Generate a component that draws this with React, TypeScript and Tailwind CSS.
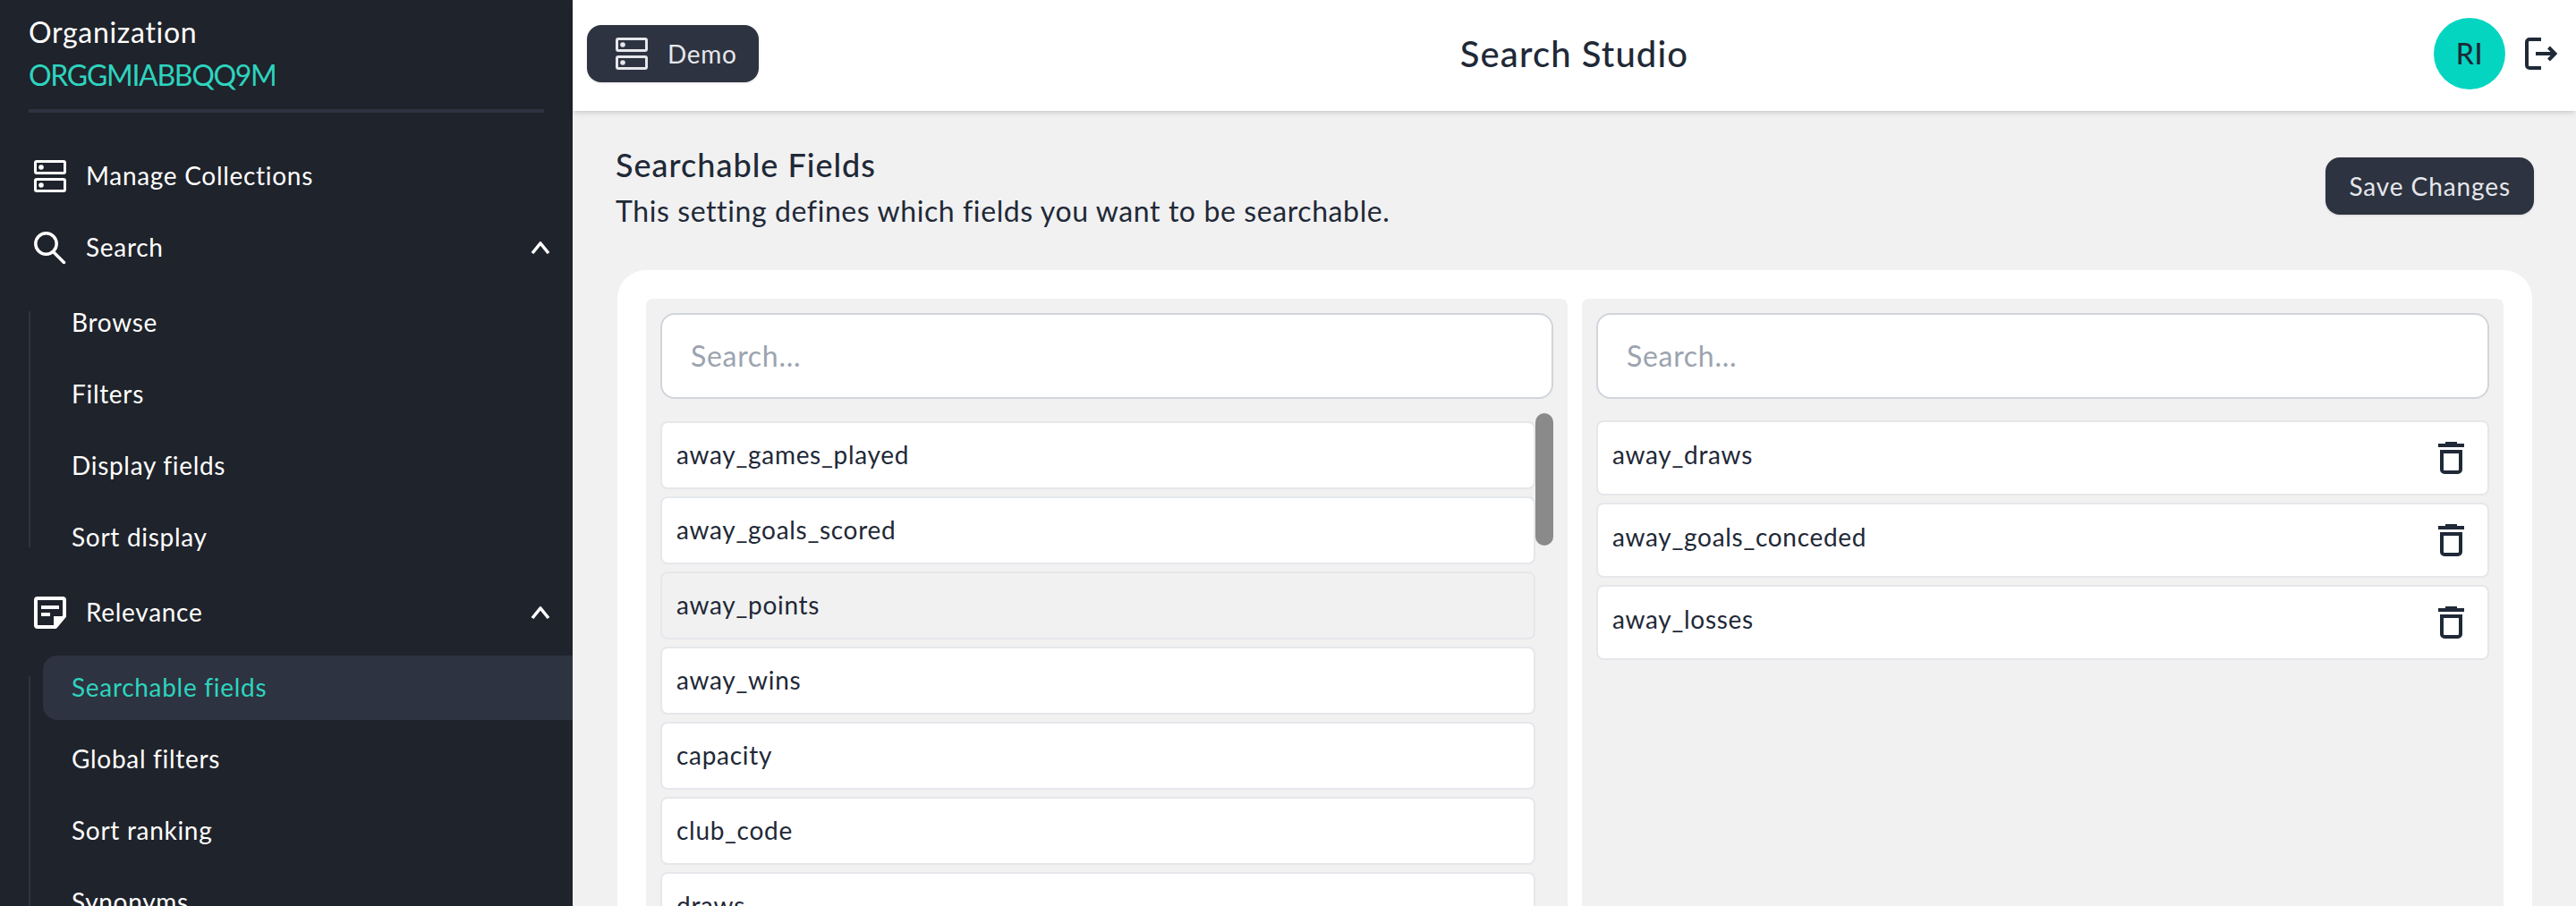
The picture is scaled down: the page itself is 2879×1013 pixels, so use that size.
import type { ReactNode } from "react";

function ServerIcon({ color }: { color: string }) {
  return (
    <svg viewBox="0 0 36 36" className={`w-[36px] h-[36px] shrink-0 ${color}`} fill="none">
      <rect x="1.5" y="1.5" width="33" height="13" rx="1.5" stroke="currentColor" strokeWidth="3" />
      <rect x="1.5" y="21.5" width="33" height="13" rx="1.5" stroke="currentColor" strokeWidth="3" />
      <circle cx="8" cy="8" r="2.8" fill="currentColor" />
      <circle cx="8" cy="28" r="2.8" fill="currentColor" />
    </svg>
  );
}

function SearchIcon() {
  return (
    <svg viewBox="0 0 36 36" className="w-[36px] h-[36px] shrink-0" fill="none" stroke="white" strokeWidth="3.5">
      <circle cx="13.5" cy="13.5" r="11.7" />
      <path d="M22 23l11.5 11.5" strokeLinecap="round" />
    </svg>
  );
}

function NoteIcon() {
  return (
    <svg viewBox="0 0 36 36" className="w-[36px] h-[36px] shrink-0" fill="none">
      <path d="M4 2h28a2 2 0 0 1 2 2v18L24 34H4a2 2 0 0 1-2-2V4a2 2 0 0 1 2-2Z" stroke="white" strokeWidth="4" strokeLinejoin="round" />
      <path d="M8 10h20v4H8zM8 18h10v4H8zM22 22h13L22 35z" fill="white" />
    </svg>
  );
}

function Chevron() {
  return (
    <svg viewBox="0 0 22 14" className="w-[22px] h-[14px] shrink-0" fill="none" stroke="white" strokeWidth="3.5">
      <path d="M2 13L11 2l9 11" />
    </svg>
  );
}

function TrashIcon() {
  return (
    <svg viewBox="0 0 29 36" className="w-[29px] h-[36px] shrink-0" fill="none">
      <path d="M8 0h13v2h8v4H0V2h8z" fill="#1f2937" />
      <path d="M4 11h21v20a3 3 0 0 1-3 3H7a3 3 0 0 1-3-3z" stroke="#1f2937" strokeWidth="4" />
    </svg>
  );
}

function LogoutIcon() {
  return (
    <svg viewBox="0 0 36 36" className="w-[36px] h-[36px] shrink-0" fill="none" stroke="#1f2937" strokeWidth="4">
      <path d="M18 2H5a3 3 0 0 0-3 3v26a3 3 0 0 0 3 3h13" />
      <path d="M12 18h21M26.5 11l7 7-7 7" />
    </svg>
  );
}

function Top({ icon, label, chevron, mt }: { icon: ReactNode; label: string; chevron?: boolean; mt: string }) {
  return (
    <div className={`flex items-center h-[72px] pl-[38px] pr-[25px] text-white ${mt}`}>
      {icon}
      <span className="ml-[22px] pb-[3px] flex-1">{label}</span>
      {chevron && <Chevron />}
    </div>
  );
}

function Sub({ label, active }: { label: string; active?: boolean }) {
  return (
    <div
      className={
        active
          ? "flex items-center h-[72px] ml-[48px] pl-[32px] pb-[3px] bg-[#2d3340] rounded-l-[16px] text-[#2dd4bf]"
          : "flex items-center h-[72px] ml-[48px] pl-[32px] pb-[3px] text-white"
      }
    >
      {label}
    </div>
  );
}

function SearchBox() {
  return (
    <div className="h-[96px] shrink-0 bg-white border-2 border-[#d1d5db] rounded-[16px] pl-[32px] flex items-center text-[32px] text-[#9ca3af]">
      Search...
    </div>
  );
}

const left = ["away_games_played", "away_goals_scored", "away_points", "away_wins", "capacity", "club_code", "draws", "founded"];
const right = ["away_draws", "away_goals_conceded", "away_losses"];

export default function App() {
  return (
    <div className="flex w-[2879px] h-[1013px] overflow-hidden bg-[#f1f1f1] text-[28px] tracking-[0.7px] text-[#1f2937] font-['Lato',sans-serif]">
      <aside className="w-[640px] shrink-0 bg-[#1f232b] overflow-hidden">
        <div className="mx-[32px] pt-[14px] h-[126px] border-b-4 border-[#2d3340]">
          <div className="text-[32px] leading-[44px] text-white">Organization</div>
          <div className="text-[32px] leading-[44px] mt-[4px] tracking-[-1.3px] text-[#2dd4bf]">ORGGMIABBQQ9M</div>
        </div>
        <Top icon={<ServerIcon color="text-white" />} label="Manage Collections" mt="mt-[35px]" />
        <Top icon={<SearchIcon />} label="Search" chevron mt="mt-[8px]" />
        <div className="relative mt-[12px] flex flex-col gap-[8px]">
          <div className="absolute left-[32px] top-[23px] h-[264px] w-[2px] bg-[#2d3340]" />
          <Sub label="Browse" />
          <Sub label="Filters" />
          <Sub label="Display fields" />
          <Sub label="Sort display" />
        </div>
        <Top icon={<NoteIcon />} label="Relevance" chevron mt="mt-[12px]" />
        <div className="relative mt-[12px] flex flex-col gap-[8px]">
          <div className="absolute left-[32px] top-[23px] h-[264px] w-[2px] bg-[#2d3340]" />
          <Sub label="Searchable fields" active />
          <Sub label="Global filters" />
          <Sub label="Sort ranking" />
          <Sub label="Synonyms" />
        </div>
      </aside>
      <main className="flex-1 min-w-0 flex flex-col">
        <header className="h-[124px] shrink-0 bg-white shadow-md grid grid-cols-[1fr_auto_1fr] items-center pb-[4px] px-[16px] z-10">
          <div>
            <button className="h-[64px] w-[192px] bg-[#2d3340] rounded-[16px] shadow-sm flex items-center pl-[32px] text-[#e5e7eb]">
              <ServerIcon color="text-[#e5e7eb]" />
              <span className="ml-[22px]">Demo</span>
            </button>
          </div>
          <h1 className="text-[40px] tracking-[1.1px] font-medium">Search Studio</h1>
          <div className="flex items-center justify-end gap-[22px] mr-[5px]">
            <div className="w-[80px] h-[80px] rounded-full bg-[#04d5c1] flex items-center justify-center text-[32px] font-medium">RI</div>
            <LogoutIcon />
          </div>
        </header>
        <div className="flex-1 min-h-0 pl-[50px] pr-[49px] pt-[38px]">
          <div className="flex items-start justify-between h-[140px]">
            <div className="-ml-[2px]">
              <h2 className="text-[36px] leading-[44px] tracking-[1px] font-medium">Searchable Fields</h2>
              <p className="text-[32px] leading-[40px] tracking-[0.6px] mt-[10px]">This setting defines which fields you want to be searchable.</p>
            </div>
            <button className="h-[64px] mt-[14px] px-[26px] mr-[-2px] bg-[#2d3340] rounded-[16px] shadow-sm text-[#e5e7eb] tracking-[0.9px]">Save Changes</button>
          </div>
          <div className="bg-white rounded-t-[32px] p-[32px] pb-0 h-[900px] grid grid-cols-2 gap-[16px]">
            <section className="bg-[#f1f1f1] rounded-[8px] p-[16px] flex flex-col">
              <SearchBox />
              <div className="relative mt-[16px] pr-[20px] pt-[9px] flex flex-col gap-[8px]">
                <div className="absolute right-0 top-0 w-[20px] h-[148px] rounded-[10px] bg-[#8a8a8a]" />
                {left.map((t) => (
                  <div
                    key={t}
                    className={`h-[76px] shrink-0 border-2 border-[#e5e7eb] rounded-[8px] pl-[16px] pb-[3px] flex items-center ${t === "away_points" ? "bg-[#f1f1f1]" : "bg-white"}`}
                  >
                    {t}
                  </div>
                ))}
              </div>
            </section>
            <section className="bg-[#f1f1f1] rounded-[8px] p-[16px] flex flex-col">
              <SearchBox />
              <div className="mt-[24px] flex flex-col gap-[8px]">
                {right.map((t) => (
                  <div key={t} className="h-[84px] bg-white border-2 border-[#e5e7eb] rounded-[8px] pl-[16px] pr-[26px] flex items-center justify-between">
                    <span className="-mt-[8px]">{t}</span>
                    <TrashIcon />
                  </div>
                ))}
              </div>
            </section>
          </div>
        </div>
      </main>
    </div>
  );
}
